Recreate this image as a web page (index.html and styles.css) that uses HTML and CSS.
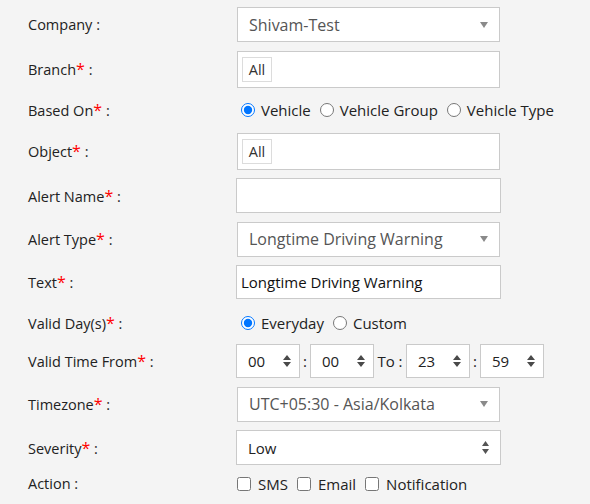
FILE: index.html
```html
<!DOCTYPE html>
<html lang="en">
<head>
    <meta charset="UTF-8">
    <meta name="viewport" content="width=device-width, initial-scale=1.0">
    <title>Alert</title>
    <link rel="stylesheet" href="styles.css">
</head>
<body>
    <form class="alert-form">
        <div class="row">
            <label class="lbl">Company :</label>
            <div class="ctrl">
                <div class="sel2 h35"><span class="sel-txt">Shivam-Test</span><span class="caret"></span></div>
            </div>
        </div>
        <div class="row">
            <label class="lbl">Branch<i class="req">*</i> :</label>
            <div class="ctrl">
                <div class="tags h37"><span class="tag">All</span></div>
            </div>
        </div>
        <div class="row h28">
            <label class="lbl">Based On<i class="req">*</i> :</label>
            <div class="ctrl opts">
                <label class="opt"><input type="radio" name="based" checked> Vehicle</label>
                <label class="opt"><input type="radio" name="based"> Vehicle Group</label>
                <label class="opt"><input type="radio" name="based"> Vehicle Type</label>
            </div>
        </div>
        <div class="row">
            <label class="lbl">Object<i class="req">*</i> :</label>
            <div class="ctrl">
                <div class="tags h37"><span class="tag">All</span></div>
            </div>
        </div>
        <div class="row">
            <label class="lbl">Alert Name<i class="req">*</i> :</label>
            <div class="ctrl">
                <input class="txt h35" type="text" value="">
            </div>
        </div>
        <div class="row">
            <label class="lbl">Alert Type<i class="req">*</i> :</label>
            <div class="ctrl">
                <div class="sel2 h35"><span class="sel-txt">Longtime Driving Warning</span><span class="caret"></span></div>
            </div>
        </div>
        <div class="row">
            <label class="lbl">Text<i class="req">*</i> :</label>
            <div class="ctrl">
                <input class="txt h34" type="text" value="Longtime Driving Warning">
            </div>
        </div>
        <div class="row h30">
            <label class="lbl">Valid Day(s)<i class="req">*</i> :</label>
            <div class="ctrl opts">
                <label class="opt"><input type="radio" name="days" checked> Everyday</label>
                <label class="opt"><input type="radio" name="days"> Custom</label>
            </div>
        </div>
        <div class="row tight">
            <label class="lbl">Valid Time From<i class="req">*</i> :</label>
            <div class="ctrl times">
                <div class="num"><span>00</span><svg class="spin" width="8" height="12" viewBox="0 0 8 12"><path d="M4 0L8 5H0Z M0 7H8L4 12Z" fill="#4a4a4a"/></svg></div>
                <span class="sep">:</span>
                <div class="num"><span>00</span><svg class="spin" width="8" height="12" viewBox="0 0 8 12"><path d="M4 0L8 5H0Z M0 7H8L4 12Z" fill="#4a4a4a"/></svg></div>
                <span class="sep to">To :</span>
                <div class="num"><span>23</span><svg class="spin" width="8" height="12" viewBox="0 0 8 12"><path d="M4 0L8 5H0Z M0 7H8L4 12Z" fill="#4a4a4a"/></svg></div>
                <span class="sep">:</span>
                <div class="num"><span>59</span><svg class="spin" width="8" height="12" viewBox="0 0 8 12"><path d="M4 0L8 5H0Z M0 7H8L4 12Z" fill="#4a4a4a"/></svg></div>
            </div>
        </div>
        <div class="row">
            <label class="lbl">Timezone<i class="req">*</i> :</label>
            <div class="ctrl">
                <div class="sel2 h35"><span class="sel-txt">UTC+05:30 - Asia/Kolkata</span><span class="caret"></span></div>
            </div>
        </div>
        <div class="row">
            <label class="lbl">Severity<i class="req">*</i> :</label>
            <div class="ctrl">
                <div class="native-sel h35"><span>Low</span><svg width="7" height="13" viewBox="0 0 7 13"><path d="M3.5 0L7 5H0Z M0 8H7L3.5 13Z" fill="#555"/></svg></div>
            </div>
        </div>
        <div class="row h26 last">
            <label class="lbl">Action :</label>
            <div class="ctrl opts">
                <label class="opt chk"><input type="checkbox"> SMS</label>
                <label class="opt chk"><input type="checkbox"> Email</label>
                <label class="opt chk"><input type="checkbox"> Notification</label>
            </div>
        </div>
    </form>
</body>
</html>
```

FILE: styles.css
```css
html {
    background: #f4f4f4;
}
body {
    margin: 0;
    font-family: 'Open Sans', 'Liberation Sans', sans-serif;
    font-size: 14.5px;
    color: #222;
}
.alert-form {
    display: flex;
    flex-direction: column;
    gap: 8.5px;
    padding: 7px 0 0 28px;
}
.row {
    display: grid;
    grid-template-columns: 208px 1fr;
    align-items: center;
}
.row.tight {
    margin-top: -2px;
}
.row.last {
    margin-top: -3px;
}
.h26 { height: 26px; }
.h28 { height: 28px; }
.h30 { height: 30px; }
.h34 { height: 34px; }
.h35 { height: 35px; }
.h37 { height: 37px; }
.lbl {
    color: #222;
}
.req {
    font-style: normal;
    font-size: 16px;
    color: #f00;
}
.ctrl {
    display: flex;
    align-items: center;
}
.sel2 {
    box-sizing: border-box;
    width: 263px;
    margin-left: 1px;
    display: flex;
    align-items: center;
    justify-content: space-between;
    padding: 0 11px;
    background: #fff;
    border: 1px solid #cacaca;
    font-size: 16px;
    color: #555;
}
.caret {
    width: 0;
    height: 0;
    border-left: 4px solid transparent;
    border-right: 4px solid transparent;
    border-top: 6px solid #8a8a8a;
}
.tags {
    box-sizing: border-box;
    width: 263px;
    margin-left: 1px;
    display: flex;
    align-items: center;
    padding: 0 4px;
    background: #fff;
    border: 1px solid #cacaca;
}
.tag {
    box-sizing: border-box;
    height: 25px;
    width: 30px;
    display: flex;
    align-items: center;
    justify-content: center;
    border: 1px solid #dcdcdc;
    font-size: 14.5px;
    color: #333;
}
.txt {
    box-sizing: border-box;
    width: 265px;
    margin: 0;
    padding: 0 4px;
    background: #fff;
    border: 1px solid #cacaca;
    font-family: inherit;
    font-size: 15px;
    color: #111;
    outline: none;
}
.opts {
    gap: 4px;
}
.opt {
    display: flex;
    align-items: center;
    font-size: 15px;
    color: #222;
}
.opt input[type="radio"] {
    width: 14px;
    height: 14px;
    margin: 0 6px 0 5px;
}
.opt input[type="checkbox"] {
    width: 14px;
    height: 14px;
    margin: 0 7px 0 1px;
}
.chk + .chk {
    margin-left: 4px;
}
.times {
    gap: 0;
}
.num {
    box-sizing: border-box;
    width: 64px;
    height: 34px;
    display: flex;
    align-items: center;
    justify-content: space-between;
    padding: 0 8px 0 11px;
    background: #fff;
    border: 1px solid #cacaca;
    font-size: 15px;
    color: #222;
}
.sep {
    width: 10px;
    text-align: center;
    font-size: 15px;
}
.sep.to {
    width: 32px;
}
.native-sel {
    box-sizing: border-box;
    width: 265px;
    display: flex;
    align-items: center;
    justify-content: space-between;
    padding: 0 11px;
    background: #fff;
    border: 1px solid #cacaca;
    font-size: 15px;
    color: #222;
}
```
